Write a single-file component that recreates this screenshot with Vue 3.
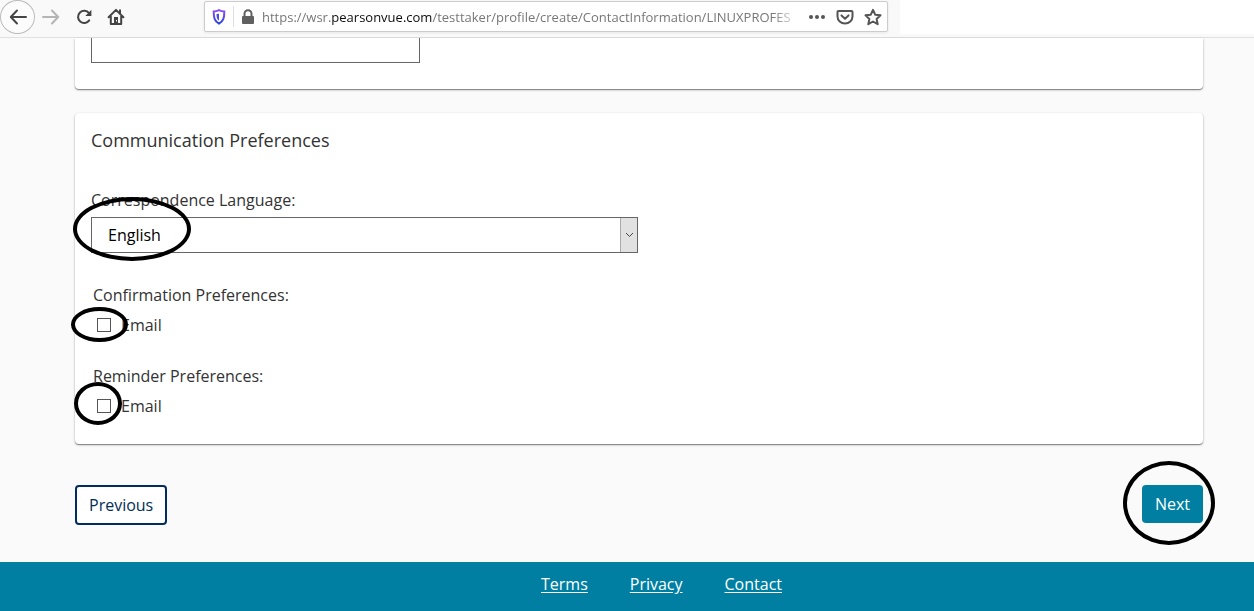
<script setup>
import { ref } from 'vue'

const street = ref('')
const language = ref('English')
const groups = ref([
  { id: 'confirmation', title: 'Confirmation Preferences:', email: false },
  { id: 'reminder', title: 'Reminder Preferences:', email: false },
])
const links = ['Terms', 'Privacy', 'Contact']
</script>

<template>
  <div class="window">
    <header class="toolbar">
      <div class="chrome">
        <button class="nav back" type="button" aria-label="Back">
          <svg width="18" height="16" viewBox="0 0 18 16"><path d="M8 1.5 1.8 8 8 14.5M2 8h15" /></svg>
        </button>
        <button class="nav forward" type="button" aria-label="Forward">
          <svg width="18" height="16" viewBox="0 0 18 16"><path d="M10 1.5 16.2 8 10 14.5M16 8H1" /></svg>
        </button>
        <button class="nav" type="button" aria-label="Reload">
          <svg width="18" height="18" viewBox="0 0 18 18">
            <path d="M14.2 12.4A6.1 6.1 0 1 1 14 5.2" />
            <path class="solid" d="M16.4 1.8v6.1h-6.1z" />
          </svg>
        </button>
        <button class="nav" type="button" aria-label="Home">
          <svg width="18" height="18" viewBox="0 0 18 18">
            <path d="M1.6 9.2 9 1.9l7.4 7.3M3.8 8.2v7.9h10.4V8.2M13 2.2v3" />
            <path class="solid" d="M7 9h4v7H7z" />
            <path class="hole" d="M9 12h1v1.6H9z" />
          </svg>
        </button>
        <div class="address">
          <svg class="shield" width="14" height="16" viewBox="0 0 14 16">
            <defs>
              <linearGradient id="shield-fill" x1="0" y1="0" x2="0" y2="1">
                <stop offset="0" stop-color="#8a4df5" />
                <stop offset="1" stop-color="#2b45dd" />
              </linearGradient>
            </defs>
            <path d="M7 1.2c1.8.9 3.5 1.3 5.3 1.3 0 6-.7 9.8-5.3 12.1C2.4 12.3 1.7 8.5 1.7 2.5 3.5 2.5 5.2 2.1 7 1.2z" fill="none" stroke="url(#shield-fill)" stroke-width="2" />
            <path d="M7 4.4v7.4C4.9 10.3 4.5 7.9 4.5 5c.9 0 1.7-.2 2.5-.6z" fill="#4a49e4" />
          </svg>
          <span class="divider"></span>
          <svg class="lock" width="14" height="16" viewBox="0 0 14 16">
            <path d="M3.5 7.5V4.7a3.5 3.5 0 0 1 7 0v2.8" fill="none" stroke="#606060" stroke-width="2" />
            <rect x="1" y="7" width="12" height="8" rx="1" fill="#606060" />
          </svg>
          <div class="url" role="textbox" aria-label="Address" tabindex="0">https://wsr.<span class="domain">pearsonvue.com</span>/testtaker/profile/create/ContactInformation/LINUXPROFES</div>
          <button class="tool" type="button" aria-label="Page actions">
            <svg width="18" height="18" viewBox="0 0 18 18"><circle cx="3" cy="9" r="2" /><circle cx="9" cy="9" r="2" /><circle cx="15" cy="9" r="2" /></svg>
          </button>
          <button class="tool" type="button" aria-label="Save to Pocket">
            <svg class="line" width="18" height="18" viewBox="0 0 18 18"><path d="M2.5 3h13a1 1 0 0 1 1 1v4.5a7.5 7 0 0 1-15 0V4a1 1 0 0 1 1-1zM5.5 7.4 9 10.7l3.5-3.3" /></svg>
          </button>
          <button class="tool" type="button" aria-label="Bookmark">
            <svg class="line" width="18" height="18" viewBox="0 0 18 18"><path d="m9 1.8 2.200 4.900 5.300.6-3.900 3.600 1.100 5.300L9 13.500l-4.700 2.700 1.100-5.300-3.900-3.600 5.300-.6z" /></svg>
          </button>
        </div>
      </div>
      <div class="blank"></div>
    </header>

    <main class="page">
      <section class="card previous-card">
        <input v-model="street" class="field" type="text" aria-label="Contact information" />
      </section>

      <form class="card" @submit.prevent>
        <h2>Communication Preferences</h2>
        <label class="label" for="language">Correspondence Language:</label>
        <div class="select-box">
          <select id="language" v-model="language">
            <option>English</option>
          </select>
          <span class="arrow">
            <svg width="9" height="6" viewBox="0 0 9 6"><path d="m1 1 3.500 3.500L8 1" /></svg>
          </span>
          <span class="ring ring-language"></span>
        </div>
        <fieldset v-for="group in groups" :key="group.id">
          <legend>{{ group.title }}</legend>
          <div class="check">
            <input :id="group.id" v-model="group.email" type="checkbox" />
            <label :for="group.id">Email</label>
            <span class="ring" :class="'ring-' + group.id"></span>
          </div>
        </fieldset>
      </form>

      <div class="actions">
        <button class="btn outline" type="button">Previous</button>
        <div class="next">
          <button class="btn primary" type="button">Next</button>
          <span class="ring ring-next"></span>
        </div>
      </div>
    </main>

    <footer>
      <a v-for="link in links" :key="link" href="#">{{ link }}</a>
    </footer>
  </div>
</template>

<style>
body {
  margin: 0;
  background: #fafafa;
}
</style>

<style scoped>
* {
  box-sizing: border-box;
}

.window {
  display: flex;
  flex-direction: column;
  min-height: 100vh;
  overflow: hidden;
  font-family: "Open Sans", "Noto Sans", sans-serif;
  font-size: 16px;
  line-height: 24px;
  color: #333;
}

button,
input,
select {
  margin: 0;
  font: inherit;
}

.toolbar {
  display: flex;
  height: 38px;
  border-bottom: 1px solid #e1e1e2;
  background: #f9f9fa;
}

.chrome {
  display: flex;
  width: 900px;
  height: 34px;
}

.blank {
  flex: 1;
  height: 34px;
  background: #fff;
}

.nav {
  display: grid;
  flex: none;
  place-items: center;
  width: 32px;
  height: 34px;
  padding: 0;
  border: 0;
  background: none;
}

.nav svg {
  fill: none;
  stroke: #444;
  stroke-width: 2;
  stroke-linecap: round;
  stroke-linejoin: round;
}

.nav .solid {
  fill: #444;
  stroke: none;
}

.nav .hole {
  fill: #fff;
  stroke: none;
}

.back {
  width: 35px;
  border: 1px solid #bbb;
  border-radius: 50%;
  background: #fcfcfc;
}

.forward {
  margin-right: 1px;
}

.nav.forward svg {
  stroke: #b5b5b6;
}

.address {
  display: flex;
  flex: 1;
  align-items: center;
  min-width: 0;
  height: 31px;
  margin: 1px 12px 0 72px;
  padding: 0 5px 0 7px;
  border: 1px solid #ccc;
  border-radius: 2px;
  background: #fff;
  box-shadow: 0 1px 3px rgba(0, 0, 0, 0.08);
}

.address svg,
.tool {
  flex: none;
}

.divider {
  flex: none;
  width: 1px;
  height: 21px;
  margin: 0 7px;
  background: #dedede;
}

.url {
  flex: 1;
  min-width: 0;
  margin: 0 8px 0 7px;
  overflow: hidden;
  font-size: 13px;
  white-space: nowrap;
  color: #777;
  -webkit-mask-image: linear-gradient(to left, transparent, #000 28px);
  mask-image: linear-gradient(to left, transparent, #000 28px);
}

.domain {
  color: #0c0c0d;
}

.tool {
  display: grid;
  place-items: center;
  width: 18px;
  height: 18px;
  padding: 0;
  border: 0;
  background: none;
  fill: #555;
}

.tool + .tool {
  margin-left: 10px;
}

.line {
  fill: none;
  stroke: #555;
  stroke-width: 2;
  stroke-linejoin: round;
  stroke-linecap: round;
}

.page {
  flex: 1;
  padding: 0 51px 37px 75px;
}

.card {
  padding: 15px 16px 26px;
  border-radius: 4px;
  background: #fff;
  box-shadow: 0 1px 1px rgba(0, 0, 0, 0.4), 0 1px 3px rgba(0, 0, 0, 0.2);
}

.previous-card {
  margin-bottom: 24px;
  padding-top: 0;
  border-radius: 0 0 4px 4px;
}

.field {
  display: block;
  width: 329px;
  height: 25px;
  padding: 0 16px;
  border: 1px solid #666;
  border-top: 0;
  background: #fff;
}

h2 {
  margin: 0 0 36px;
  font-size: 18px;
  font-weight: 400;
  line-height: 24px;
}

.label {
  display: block;
  margin-bottom: 5px;
}

.select-box {
  position: relative;
  width: 50%;
  max-width: 547px;
  margin-bottom: 30px;
}

select {
  display: block;
  width: 100%;
  height: 36px;
  padding: 0 32px 0 16px;
  border: 1px solid #666;
  border-radius: 0;
  appearance: none;
  background: #fff;
  color: #000;
}

.arrow {
  position: absolute;
  top: 1px;
  right: 1px;
  bottom: 1px;
  display: grid;
  place-items: center;
  width: 17px;
  border-left: 1px solid #aaa;
  background: #e1e1e1;
  pointer-events: none;
}

.arrow svg {
  fill: none;
  stroke: #444;
}

fieldset {
  min-width: 0;
  margin: 0 0 27px;
  padding: 0 2px;
  border: 0;
}

fieldset:last-child {
  margin-bottom: 0;
}

legend {
  margin-bottom: 6px;
  padding: 0;
}

.check {
  position: relative;
  display: flex;
  align-items: center;
  gap: 10px;
  padding-left: 4px;
}

.check input {
  width: 14px;
  height: 14px;
  border: 1px solid #555;
  appearance: none;
  background: #fff;
}

.check input:checked {
  background: #007fa3;
}

.ring {
  position: absolute;
  border: 4px solid #000;
  border-radius: 50%;
  pointer-events: none;
}

.ring-language {
  top: -20px;
  left: -18px;
  width: 118px;
  height: 64px;
}

.ring-confirmation {
  top: -6px;
  left: -22px;
  width: 57px;
  height: 35px;
}

.ring-reminder {
  top: -12px;
  left: -19px;
  width: 48px;
  height: 43px;
}

.ring-next {
  top: -24px;
  left: -19px;
  width: 92px;
  height: 84px;
}

.actions {
  display: flex;
  align-items: flex-start;
  justify-content: space-between;
  margin-top: 41px;
}

.btn {
  display: block;
  border-radius: 4px;
}

.outline {
  padding: 6px 12px;
  border: 2px solid #002c5f;
  background: #fff;
  color: #003057;
}

.next {
  position: relative;
}

.primary {
  padding: 7px 13px;
  border: 0;
  background: #007fa3;
  color: #fff;
}

footer {
  display: flex;
  justify-content: center;
  gap: 42px;
  padding: 10px 0 15px 69px;
  background: #007fa3;
}

footer a {
  color: #fff;
  text-underline-offset: 2px;
}
</style>
